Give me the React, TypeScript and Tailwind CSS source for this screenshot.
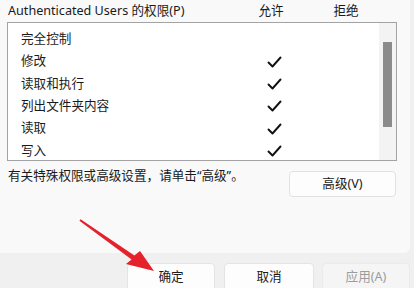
import React from 'react';

const rows = [
  { name: '完全控制', allow: false },
  { name: '修改', allow: true },
  { name: '读取和执行', allow: true },
  { name: '列出文件夹内容', allow: true },
  { name: '读取', allow: true },
  { name: '写入', allow: true },
];

const Check = () => (
  <svg width="15" height="12" viewBox="0 0 15 12" fill="none">
    <polyline points="1.5,6.5 5.5,10.5 13.5,1.5" stroke="#111" strokeWidth={1.9} strokeLinecap="round" strokeLinejoin="round" />
  </svg>
);

export default function App() {
  return (
    <div
      className="relative w-[414px] h-[288px] overflow-hidden bg-[#f0f0f0] text-[12.6px] text-[#1a1a1a] flex flex-col"
      style={{ fontFamily: '"Noto Sans", "Noto Sans CJK SC", sans-serif' }}
    >
      {/* upper panel */}
      <div className="h-[253px] w-[410px] shrink-0 bg-[#f9f9f9] rounded-br-[6px] pl-[7px] pr-[13px]">
        <div className="flex h-[23px] items-center pl-[1px]">
          <span className="w-[238px]">Authenticated Users 的权限(P)</span>
          <span className="w-[50px] text-center">允许</span>
          <span className="w-[50px] ml-[25px] text-center">拒绝</span>
        </div>

        <div className="flex h-[139px] -mt-[1px] border border-[#a3a3a3] bg-white overflow-hidden">
          <div className="flex-1 pt-[5px]">
            {rows.map((r) => (
              <div key={r.name} className="flex h-[22.4px] items-center">
                <span className="w-[238px] pl-[13px]">{r.name}</span>
                <span className="w-[50px] ml-[3px] flex justify-center">{r.allow && <Check />}</span>
              </div>
            ))}
          </div>
          <div className="w-[17px] bg-[#f3f3f3] pt-[19px] px-[4px]">
            <div className="h-[85px] bg-[#8b8b8b]" />
          </div>
        </div>

        <div className="flex">
          <span className="pt-[6px] pl-[1px] leading-[18px]">有关特殊权限或高级设置，请单击“高级”。</span>
          <button className="ml-auto mr-[1px] mt-[10px] w-[107px] h-[26px] bg-[#fdfdfd] border border-[#e2e2e2] rounded-[4px]">
            高级(V)
          </button>
        </div>
      </div>

      {/* bottom buttons */}
      <div className="flex pl-[127px] pt-[10px]">
        <button className="w-[88px] h-[28px] bg-[#fdfdfd] border border-[#e4e4e4] rounded-[4px]">确定</button>
        <button className="w-[90px] h-[28px] ml-[9px] bg-[#fdfdfd] border border-[#e4e4e4] rounded-[4px]">取消</button>
        <button className="w-[88px] h-[28px] ml-[8px] bg-[#f5f5f5] border border-[#ebebeb] rounded-[4px] text-[#9c9c9c]">
          应用(A)
        </button>
      </div>

      {/* red arrow annotation */}
      <svg className="absolute left-0 top-0 pointer-events-none" width="414" height="288" viewBox="0 0 414 288">
        <polygon
          points="80.6,219.2 134.4,255.4 140,251 154,271 126,264 131.6,259.6 79.4,220.8"
          fill="#e5212b"
        />
      </svg>
    </div>
  );
}
